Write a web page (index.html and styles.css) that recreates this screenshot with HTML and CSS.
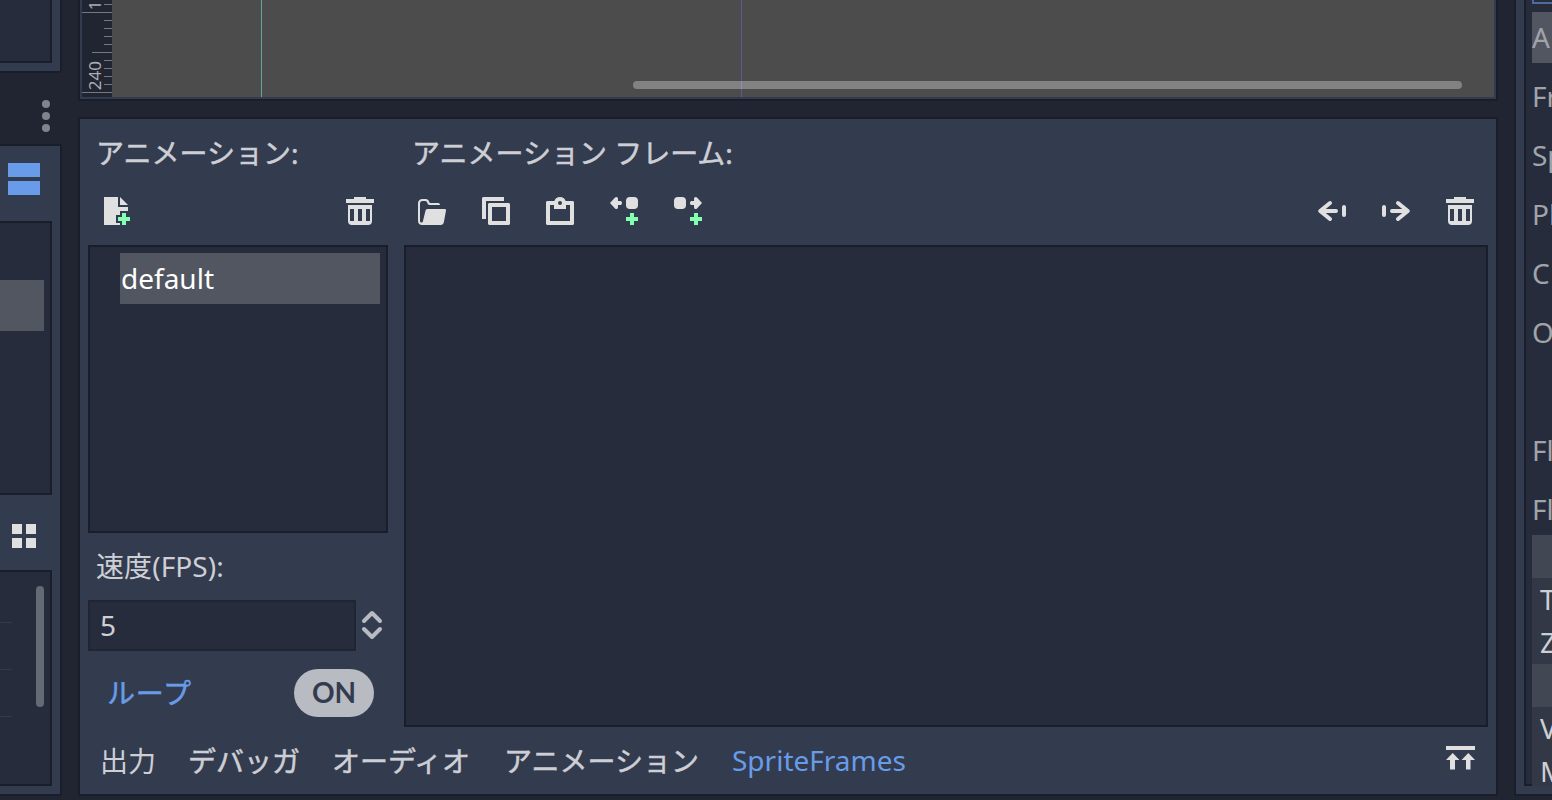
FILE: index.html
```html
<!DOCTYPE html>
<html lang="ja">
<head>
<meta charset="utf-8">
<title>SpriteFrames</title>
<link rel="stylesheet" href="styles.css">
</head>
<body>
<svg class="defs" width="0" height="0">
  <symbol id="trash" viewBox="0 0 16 16"><path fill-rule="evenodd" d="M5 1h6v1h4v2H1V2h4zM2 5h12v8a2 2 0 0 1-2 2H4a2 2 0 0 1-2-2zm1 2v6h2V7zm4 0v6h2V7zm4 0v6h2V7z"/></symbol>
  <symbol id="plus" viewBox="0 0 16 16"><path d="M11 9h2v2h2v2h-2v2h-2v-2H9v-2h2z"/></symbol>
</svg>
<div class="editor">
  <aside class="left">
    <section class="panel left-top"><div class="well"></div></section>
    <div class="dock-menu"><i></i><i></i><i></i></div>
    <section class="panel left-files">
      <div class="split-icon"><i></i><i></i></div>
      <div class="well tree"><div class="tree-selected"></div></div>
      <div class="grid-icon"><i></i><i></i><i></i><i></i></div>
      <div class="well files">
        <div class="rules"><i></i><i></i><i></i></div>
        <div class="scroll"></div>
      </div>
    </section>
  </aside>

  <main class="center">
    <section class="panel viewport">
      <div class="ruler">
        <svg width="30" height="97" viewBox="0 0 30 97"><path d="M22 4.500h8M0 12.500h30M22 20.500h8M22 28.500h8M22 36.500h8M22 44.500h8M10 52.500h20M22 60.500h8M22 68.500h8M22 76.500h8M22 84.500h8M0 92.500h30"/></svg>
        <span class="mark mark-a">160</span>
        <span class="mark mark-b">240</span>
      </div>
      <div class="canvas">
        <i class="guide guide-y"></i><i class="guide guide-x"></i><i class="hscroll"></i>
      </div>
    </section>

    <section class="panel frames">
      <div class="columns">
        <div class="anims">
          <h2 class="label kana">アニメーション:</h2>
          <div class="tools">
            <svg class="icon" viewBox="0 0 16 16"><path d="M1 1h7v5h5v2H9v2H7v4h2v1H1zM9 1l4 4H9z"/><path class="green" d="M10 9h2v2h2v2h-2v2h-2v-2H8v-2h2z"/></svg>
            <span class="spacer"></span>
            <svg class="icon"><use href="#trash"/></svg>
          </div>
          <div class="well anim-list"><div class="anim-item">default</div></div>
          <div class="label speed">速度(FPS):</div>
          <div class="spin">
            <div class="field">5</div>
            <svg width="32" height="50" viewBox="0 0 32 50"><path d="M8 21l8-8 8 8M8 29l8 8 8-8"/></svg>
          </div>
          <div class="loop"><span class="kana">ループ</span><b class="switch">ON</b></div>
        </div>
        <div class="frame-area">
          <h2 class="label kana">アニメーション フレーム:</h2>
          <div class="tools">
            <svg class="icon" viewBox="0 0 16 16"><path fill-rule="evenodd" d="M3.200 2C1.900 2 1 2.900 1 4v9c0 1.200.9 2 2 2h9.400c.8 0 1.300-.4 1.500-1.200l1.100-6c.1-.5-.2-.8-.7-.8H6c-.7 0-1.100.3-1.300 1l-1.200 5c-.3 1.100-1.500.9-1.500 0V4.200C2 3.500 2.500 3 3.200 3h1.300C5.200 3 5.500 3.400 5.700 4c.2.700.6 1 1.300 1h5c0-.7-.5-1-1.200-1H7.300c-.4 0-.6-.2-.7-.6C6.300 2.500 5.700 2 4.900 2z"/></svg>
            <svg class="icon" viewBox="0 0 16 16"><path fill-rule="evenodd" d="M1.500 1H12v2H3v9H1V1.500zM4.500 4h10l.5.5v10l-.5.500h-10l-.5-.5v-10zM6 6v7h7V6z"/></svg>
            <svg class="icon" viewBox="0 0 16 16"><path fill-rule="evenodd" d="M8 1a3 3 0 0 0-2.830 2H1.500l-.5.500v11l.5.500h13l.5-.5v-11l-.5-.5h-3.670A3 3 0 0 0 8 1zm0 2a1 1 0 1 1 0 2 1 1 0 0 1 0-2zM3 5h2v2h6V5h2v8H3z"/></svg>
            <svg class="icon" viewBox="0 0 16 16"><path d="M3.500 1.300c.7-.6 1.500-.3 1.500.7v1h1.300c.9 0 .9 2 0 2H5v1c0 1-.8 1.300-1.500.7L1 4z"/><rect x="9" y="1" width="6" height="6" rx="2"/><use class="green" href="#plus"/></svg>
            <svg class="icon" viewBox="0 0 16 16"><path d="M12.500 1.300c-.7-.6-1.500-.3-1.500.7v1H9.700c-.9 0-.9 2 0 2H11v1c0 1 .8 1.300 1.500.7L15 4z"/><rect x="1" y="1" width="6" height="6" rx="2"/><use class="green" href="#plus"/></svg>
            <span class="spacer"></span>
            <svg class="icon stroke" viewBox="0 0 16 16"><path d="M7 4L2.100 8 7 12M3 8h7M14 6v4"/></svg>
            <svg class="icon stroke" viewBox="0 0 16 16"><path d="M9 4l4.900 4L9 12M13 8H6M2 6v4"/></svg>
            <svg class="icon"><use href="#trash"/></svg>
          </div>
          <div class="well frame-list"></div>
        </div>
      </div>
      <nav class="tabs">
        <span class="tab t1">出力</span><span class="tab kana t2">デバッガ</span><span class="tab kana t3">オーディオ</span><span class="tab kana t4">アニメーション</span><span class="tab active">SpriteFrames</span>
        <span class="spacer"></span>
        <svg class="icon expand" viewBox="0 0 32 32"><path d="M2 3h29v4H2zM8.700 10L15.500 17H11v9.500H6V17H2zM24.300 10L31 17h-4.500v9.500H22V17h-4.500z"/></svg>
      </nav>
    </section>
  </main>

  <aside class="right">
    <div class="well inspector">
      <div class="box"></div>
      <div class="prop chosen">A</div>
      <div class="prop">Fr</div>
      <div class="prop">Sp</div>
      <div class="prop">Pl</div>
      <div class="prop">C</div>
      <div class="prop">O</div>
      <div class="prop blank"></div>
      <div class="prop">Fl</div>
      <div class="prop">Fl</div>
      <div class="head"></div>
      <div class="sub">T</div>
      <div class="sub">Z</div>
      <div class="head"></div>
      <div class="sub">V</div>
      <div class="sub">M</div>
    </div>
  </aside>
</div>
</body>
</html>
```
FILE: styles.css
```css
* { box-sizing: border-box; }
body {
  margin: 0;
  width: 1552px;
  height: 800px;
  overflow: hidden;
  background: #202531;
  color: #cdcfd5;
  font: 28px/38px "Noto Sans", "Noto Sans CJK JP", sans-serif;
}
.defs { position: absolute; }
.editor { display: flex; width: 1552px; height: 800px; overflow: hidden; }
.panel { background: #333b4f; border: 2px solid #191e2a; }
.well { background: #262c3b; border: 2px solid #191e2a; }
.spacer { flex: 1; }
.icon { width: 32px; height: 32px; fill: #e0e0e0; flex: none; }
.green { fill: #84ffb1; }
.stroke { fill: none; stroke: #e0e0e0; stroke-width: 2; stroke-linecap: round; stroke-linejoin: round; }
.kana { -webkit-text-stroke: .5px currentColor; }

.left { width: 62px; height: 796px; display: flex; flex-direction: column; }
.left .panel { border-left: 0; padding-right: 8px; }
.left .well { border-left: 0; }
.left-top { height: 73px; border-top: 0; }
.left-top .well { height: 63px; border-top: 0; }
.dock-menu { height: 71px; padding: 27px 0 0 42px; display: flex; flex-direction: column; gap: 4px; }
.dock-menu i { width: 8px; height: 8px; border-radius: 50%; background: #80838b; }
.left-files { height: 652px; }
.split-icon { height: 75px; padding: 17px 0 0 8px; display: grid; grid-template-rows: 14px 14px; gap: 4px; }
.split-icon i { width: 32px; background: #699ce8; }
.tree { height: 274px; padding-top: 57px; }
.tree-selected { width: 44px; height: 51px; background: #525661; }
.grid-icon { height: 75px; padding: 29px 0 0 12px; display: grid; grid-template: 10px 10px / 10px 10px; gap: 4px; }
.grid-icon i { background: #e0e0e0; }
.files { height: 216px; display: flex; justify-content: space-between; padding: 14px 6px 0 0; }
.rules { padding-top: 36px; display: flex; flex-direction: column; gap: 46px; }
.rules i { width: 12px; height: 1px; background: #343a48; }
.scroll { width: 8px; height: 121px; border-radius: 4px; background: #666a75; }

.center { width: 1420px; margin-left: 16px; display: flex; flex-direction: column; gap: 16px; }
.viewport { height: 101px; border-top: 0; padding: 0 2px 2px; display: flex; }
.ruler { position: relative; width: 30px; height: 97px; overflow: hidden; background: #202531; }
.ruler svg { display: block; stroke: #757983; stroke-width: 1; }
.mark { position: absolute; left: 3px; writing-mode: vertical-rl; transform: rotate(180deg); font-size: 17px; line-height: 20px; color: #a9acb4; }
.mark-a { bottom: 87px; }
.mark-b { bottom: 7px; }
.canvas { position: relative; flex: 1; height: 97px; background: #4c4c4c; }
.guide { position: absolute; top: 0; width: 1px; height: 97px; }
.guide-y { left: 149px; background: #62a49c; }
.guide-x { left: 629px; background: #605a94; }
.hscroll { position: absolute; left: 521px; top: 81px; width: 829px; height: 8px; border-radius: 4px; background: rgba(255,255,255,.3); }

.frames { height: 679px; padding: 8px 8px 0; }
.columns { display: flex; gap: 16px; height: 600px; }
.anims { width: 300px; }
.frame-area { flex: 1; }
.frame-list { height: 482px; }
.label { margin: 0; padding: 7px 8px 0; height: 50px; font-weight: 400; font-size: 28px; line-height: 38px; white-space: nowrap; }
.tools { display: flex; gap: 32px; height: 68px; padding: 18px 12px 0; }
.anims .tools { padding-left: 14px; }
.anim-list { height: 288px; padding: 6px 6px 0 30px; }
.anim-item { height: 51px; padding-left: 1px; line-height: 51px; color: #fff; background: #525661; }
.speed { height: 67px; padding-top: 14px; letter-spacing: .1px; }
.spin { display: flex; height: 51px; }
.spin svg { fill: none; stroke: #b9bbc2; stroke-width: 4; stroke-linecap: round; stroke-linejoin: round; }
.field { width: 268px; height: 51px; padding-left: 10px; line-height: 47px; background: #262c3b; border: 2px solid #202531; }
.loop { display: flex; justify-content: space-between; height: 66px; padding: 18px 14px 0 19px; line-height: 48px; color: #699ce8; }
.loop .kana { letter-spacing: .8px; }
.switch { width: 80px; height: 48px; border-radius: 24px; background: #b9bbc2; color: #333b4f; text-align: center; font: 700 28px/47px Lato, sans-serif; }
.tabs { display: flex; height: 67px; padding: 15px 12px 0; white-space: nowrap; }
.t1 { width: 88px; }
.t2 { width: 144px; }
.t3 { width: 172px; }
.t4 { width: 228px; }
.active { color: #699ce8; line-height: 36px; }
.expand { margin-top: 1px; }

.right { width: 38px; height: 796px; margin-left: 16px; padding-left: 8px; background: #333b4f; border: 2px solid #191e2a; border-width: 0 0 2px 2px; }
.inspector { width: 28px; height: 786px; padding-left: 6px; border-width: 0 0 2px 2px; }
.box { height: 4px; border: 2px solid #4d6a9a; border-width: 0 0 2px 2px; }
.prop { height: 51px; margin-top: 8px; line-height: 51px; color: #a0a4ab; }
.head { height: 43px; background: #424754; }
.prop + .head { margin-top: 0; }
.sub { height: 43px; padding-left: 8px; line-height: 43px; background: #323846; }
.sub:last-child { height: 36px; line-height: 43px; }
.chosen { background: #525661; }
```
